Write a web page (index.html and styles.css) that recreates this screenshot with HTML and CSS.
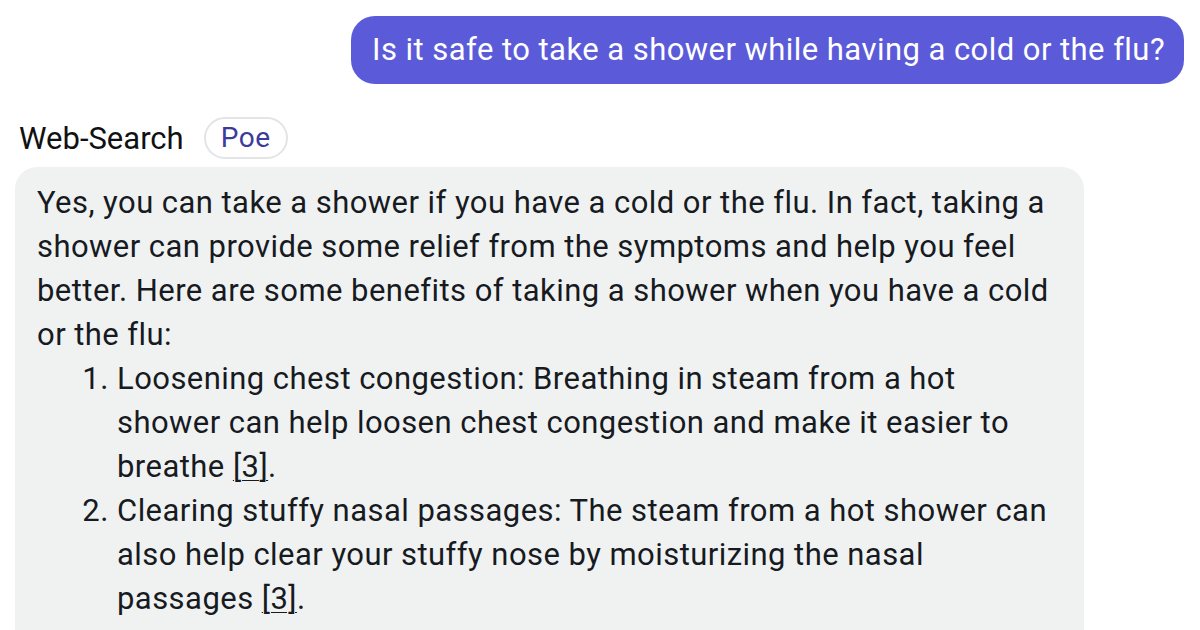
FILE: index.html
```html
<!DOCTYPE html>
<html lang="en">
<head>
    <meta charset="UTF-8">
    <meta name="viewport" content="width=device-width, initial-scale=1.0">
    <title>Web-Search - Poe</title>
    <link rel="stylesheet" href="styles.css">
</head>
<body>
    <div class="chat">
        <div class="row-user">
            <div class="bubble-user">Is it safe to take a shower while having a cold or the flu?</div>
        </div>

        <div class="bot-header">
            <span class="bot-name">Web-Search</span>
            <span class="bot-tag">Poe</span>
        </div>

        <div class="bubble-bot">
            <p>Yes, you can take a shower if you have a cold or the flu. In fact, taking a shower can provide some relief from the symptoms and help you feel better. Here are some benefits of taking a shower when you have a cold or the flu:</p>
            <ol>
                <li>Loosening chest congestion: Breathing in steam from a hot shower can help loosen chest congestion and make it easier to breathe <a href="#">[3]</a>.</li>
                <li>Clearing stuffy nasal passages: The steam from a hot shower can also help clear your stuffy nose by moisturizing the nasal passages <a href="#">[3]</a>.</li>
            </ol>
        </div>
    </div>
</body>
</html>
```

FILE: styles.css
```css
* {
    margin: 0;
    padding: 0;
    box-sizing: border-box;
    font-family: Roboto, 'Liberation Sans', sans-serif;
}

body {
    background: #ffffff;
    height: 630px;
    overflow: hidden;
}

.chat {
    padding: 16px 16px 0 15px;
}

.row-user {
    display: flex;
    justify-content: flex-end;
}

.bubble-user {
    background: #5b5bd9;
    color: #ffffff;
    font-size: 31px;
    letter-spacing: 0.45px;
    line-height: 68px;
    height: 68px;
    padding: 0 19px 0 21px;
    border-radius: 24px;
    white-space: nowrap;
}

.bot-header {
    display: flex;
    align-items: center;
    gap: 20px;
    margin-top: 33px;
    padding-left: 4px;
}

.bot-name {
    font-size: 31px;
    color: #111111;
}

.bot-tag {
    font-size: 28px;
    letter-spacing: 0.5px;
    color: #3b3b9c;
    border: 2px solid #e3e4e6;
    border-radius: 21px;
    height: 42px;
    line-height: 38px;
    padding: 0 15px;
}

.bubble-bot {
    margin-top: 8px;
    width: 1069px;
    background: #f0f2f2;
    border-radius: 22px;
    padding: 14px 22px 60px 22px;
    color: #171a1f;
    font-size: 31px;
    letter-spacing: 0.45px;
    line-height: 44px;
}

.bubble-bot ol {
    padding-left: 80px;
}

.bubble-bot a {
    color: inherit;
    text-decoration: underline;
    text-decoration-thickness: 1px;
    text-underline-offset: 3px;
}
```
